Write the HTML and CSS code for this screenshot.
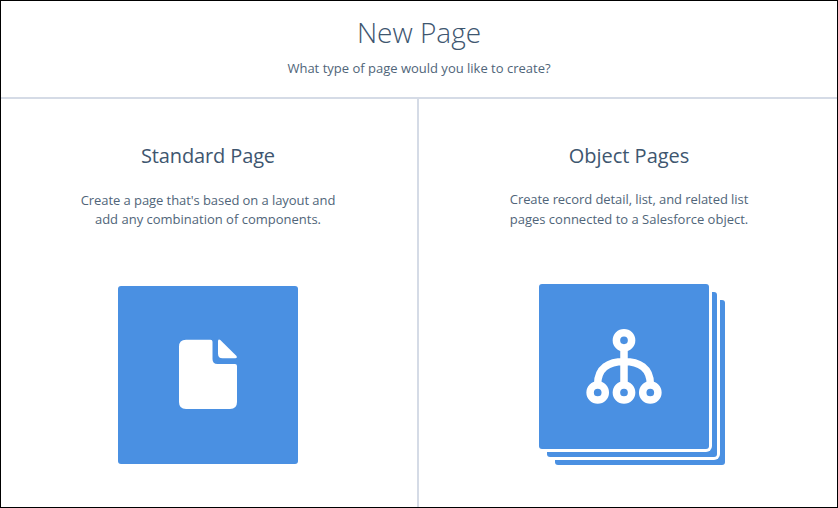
FILE: index.html
```html
<!DOCTYPE html>
<html lang="en">
<head>
<meta charset="utf-8">
<title>New Page</title>
<link rel="stylesheet" href="styles.css">
</head>
<body>
<main class="dialog">
  <header class="header">
    <h1 class="title">New Page</h1>
    <p class="subtitle">What type of page would you like to create?</p>
  </header>
  <div class="options">
    <section class="option option-standard">
      <h2 class="option-title">Standard Page</h2>
      <p class="option-text"><span class="tight">Create a page that's based on a layout and</span><br>add any combination of components.</p>
      <div class="tile">
        <svg width="180" height="178" viewBox="0 0 180 178" fill="#fff">
          <path d="M68 53.7h24.500q2 0 2 2V73q0 5 5 5h17.500q2 0 2 2v36q0 7-7 7H68q-7 0-7-7V60.700q0-7 7-7z"/>
          <path d="M102.300 53.900l16.200 16.200q1 2.200-1.200 2.200H104.500q-4.500 0-4.500-4.500V55q.3-2.200 2.300-1.100z"/>
        </svg>
      </div>
    </section>
    <section class="option option-object">
      <h2 class="option-title">Object Pages</h2>
      <p class="option-text"><span class="tight">Create record detail, list, and related list</span><br>pages connected to a Salesforce object.</p>
      <div class="stack">
        <div class="sheet sheet-back"></div>
        <div class="sheet sheet-middle"></div>
        <div class="sheet sheet-front">
          <svg width="170" height="165" viewBox="0 0 170 165" fill="none" stroke="#fff" stroke-width="7.500">
            <circle cx="85" cy="56.300" r="7.600"/>
            <circle cx="58.700" cy="108.500" r="7.600"/>
            <circle cx="85" cy="108.500" r="7.600"/>
            <circle cx="111.300" cy="108.500" r="7.600"/>
            <path d="M85 65v35M58.700 100C58.700 84 70 77.500 85 77.500S111.300 84 111.300 100"/>
          </svg>
        </div>
      </div>
    </section>
  </div>
</main>
</body>
</html>
```
FILE: styles.css
```css
* { box-sizing: border-box; }
body { margin: 0; }
h1, h2, p { margin: 0; }

.dialog {
  display: flex;
  flex-direction: column;
  width: 838px;
  height: 508px;
  border: 1px solid #000;
  background: #fff;
  color: #3e566f;
  font-family: "Open Sans", "Noto Sans", sans-serif;
  text-align: center;
}
svg { display: block; }

.header {
  height: 98px;
  padding-top: 11px;
  border-bottom: 2px solid #d5dbe6;
}
.title { font-size: 28px; font-weight: 300; line-height: 40px; }
.subtitle { margin-top: 7px; font-size: 13px; line-height: 19px; color: #506579; }

.options { display: flex; flex: 1; }
.option { display: flex; flex-direction: column; align-items: center; }
.option-standard { width: 418px; padding-right: 2px; border-right: 2px solid #d5dbe6; }
.option-object { flex: 1; padding-left: 2px; }
.option-title { margin-top: 42px; font-size: 20px; font-weight: 400; line-height: 30px; }
.option-standard .option-title { letter-spacing: -0.13px; }
.option-text { margin-top: 20px; font-size: 13px; line-height: 19px; color: #506579; }
.option-object .option-text { margin-top: 18px; line-height: 20px; }
.tight { letter-spacing: -0.07px; }

.tile {
  width: 180px;
  height: 178px;
  margin-top: 57px;
  border-radius: 3px;
  background: #4a90e2;
}
.stack {
  display: grid;
  width: 186px;
  height: 181px;
  margin: 55px 0 0 6px;
}
.sheet {
  grid-area: 1 / 1;
  width: 170px;
  height: 165px;
  border-radius: 3px;
  background: #4a90e2;
  box-shadow: 0 0 0 3px #fff;
}
.sheet-back { margin: 16px 0 0 16px; }
.sheet-middle { margin: 8px 0 0 8px; }
```
